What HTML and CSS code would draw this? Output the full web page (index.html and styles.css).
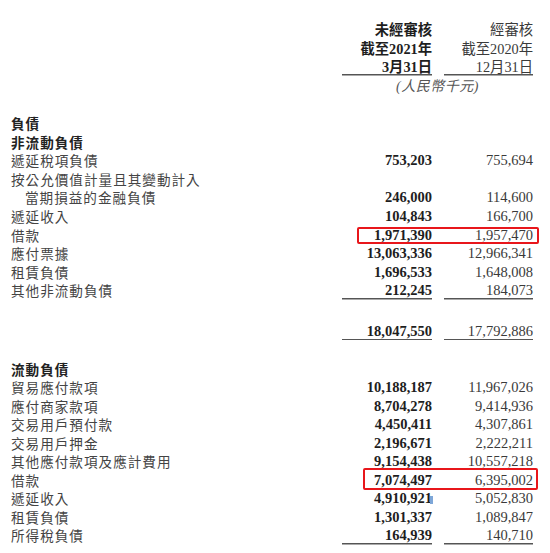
FILE: index.html
```html
<!DOCTYPE html>
<html>
<head>
<meta charset="utf-8">
<link rel="stylesheet" href="styles.css">
</head>
<body>
<div class="sheet">
  <div class="head">
    <div class="row"><span class="lab"></span><span class="c1 b">未經審核</span><span class="c2">經審核</span></div>
    <div class="row"><span class="lab"></span><span class="c1 b">截至2021年</span><span class="c2">截至2020年</span></div>
    <div class="row ul"><span class="lab"></span><span class="c1 b">3月31日</span><span class="c2">12月31日</span></div>
    <div class="row unitrow"><span class="lab"></span><span class="unit">(人民幣千元)</span></div>
  </div>

  <div class="sec sec1">
    <div class="row"><span class="lab hd">負債</span></div>
    <div class="row"><span class="lab hd">非流動負債</span></div>
    <div class="row"><span class="lab">遞延稅項負債</span><span class="c1 b">753,203</span><span class="c2">755,694</span></div>
    <div class="row"><span class="lab">按公允價值計量且其變動計入</span></div>
    <div class="row"><span class="lab ind">當期損益的金融負債</span><span class="c1 b">246,000</span><span class="c2">114,600</span></div>
    <div class="row"><span class="lab">遞延收入</span><span class="c1 b">104,843</span><span class="c2">166,700</span></div>
    <div class="row box1"><span class="lab">借款</span><span class="c1 b">1,971,390</span><span class="c2">1,957,470</span></div>
    <div class="row"><span class="lab">應付票據</span><span class="c1 b">13,063,336</span><span class="c2">12,966,341</span></div>
    <div class="row"><span class="lab">租賃負債</span><span class="c1 b">1,696,533</span><span class="c2">1,648,008</span></div>
    <div class="row ul"><span class="lab">其他非流動負債</span><span class="c1 b">212,245</span><span class="c2">184,073</span></div>
  </div>

  <div class="row ul total"><span class="lab"></span><span class="c1 b">18,047,550</span><span class="c2">17,792,886</span></div>

  <div class="sec sec2">
    <div class="row"><span class="lab hd">流動負債</span></div>
    <div class="row"><span class="lab">貿易應付款項</span><span class="c1 b">10,188,187</span><span class="c2">11,967,026</span></div>
    <div class="row"><span class="lab">應付商家款項</span><span class="c1 b">8,704,278</span><span class="c2">9,414,936</span></div>
    <div class="row"><span class="lab">交易用戶預付款</span><span class="c1 b">4,450,411</span><span class="c2">4,307,861</span></div>
    <div class="row"><span class="lab">交易用戶押金</span><span class="c1 b">2,196,671</span><span class="c2">2,222,211</span></div>
    <div class="row"><span class="lab">其他應付款項及應計費用</span><span class="c1 b">9,154,438</span><span class="c2">10,557,218</span></div>
    <div class="row box2"><span class="lab">借款</span><span class="c1 b">7,074,497</span><span class="c2">6,395,002</span></div>
    <div class="row"><span class="lab">遞延收入</span><span class="c1 b">4,910,92<span class="sel">1</span></span><span class="c2">5,052,830</span></div>
    <div class="row"><span class="lab">租賃負債</span><span class="c1 b">1,301,337</span><span class="c2">1,089,847</span></div>
    <div class="row ul"><span class="lab">所得稅負債</span><span class="c1 b">164,939</span><span class="c2">140,710</span></div>
  </div>
</div>
</body>
</html>
```

FILE: styles.css
```css
html, body {
  margin: 0;
  padding: 0;
  background: #ffffff;
}

.sheet {
  width: 550px;
  height: 553px;
  overflow: hidden;
  padding-top: 21px;
  box-sizing: border-box;
  font-family: "Liberation Serif", "Noto Sans CJK TC", serif;
  color: #333;
}

.row {
  position: relative;
  display: grid;
  grid-template-columns: 1fr 90px 89px;
  column-gap: 12px;
  padding-left: 11px;
  padding-right: 17px;
  height: 18.6px;
  line-height: 18.6px;
  font-size: 14.5px;
}

.lab {
  font-family: "Noto Sans CJK TC", sans-serif;
  font-size: 13.6px;
  letter-spacing: 1px;
  color: #444;
  white-space: nowrap;
}

.lab.hd {
  font-weight: 700;
  color: #222;
}

.lab.ind {
  padding-left: 14px;
}

.c1, .c2 {
  text-align: right;
  white-space: nowrap;
}

.c1 {
  grid-column: 2;
}

.c2 {
  grid-column: 3;
  color: #3a3a3a;
}

.b {
  font-weight: 700;
  color: #1e1e1e;
}

.head .c1, .head .c2 {
  font-size: 14.3px;
}

.row.ul .c1, .row.ul .c2 {
  background: linear-gradient(#555, #555) left bottom / 100% 1.5px no-repeat;
}

.head .row.ul .c1, .head .row.ul .c2 {
  background-position: left calc(100% - 1px);
}

.unitrow {
  margin-top: 1px;
}

.unit {
  grid-column: 2 / 4;
  text-align: center;
  font-style: italic;
  font-size: 14px;
  letter-spacing: 0.5px;
  color: #555;
  font-family: "Liberation Serif", "Noto Sans CJK TC", serif;
}

.sec1 {
  margin-top: 17.6px;
}

.total {
  margin-top: 21.7px;
}

.sec2 {
  margin-top: 19.7px;
}

.sec2 .row {
  height: 18.5px;
  line-height: 18.5px;
}

.box1::after,
.box2::after {
  content: "";
  position: absolute;
  box-sizing: border-box;
  border: 2px solid #e8161b;
  border-radius: 2px;
}

.box1::after {
  left: 357px;
  right: 11px;
  top: 1.4px;
  height: 16.6px;
}

.box2::after {
  left: 363px;
  right: 12px;
  top: -2.4px;
  height: 21.7px;
}

.sel {
  position: relative;
}

.sel::after {
  content: "";
  position: absolute;
  right: -1px;
  top: 6px;
  width: 3px;
  height: 8px;
  background: #7ea7d8;
}
```
